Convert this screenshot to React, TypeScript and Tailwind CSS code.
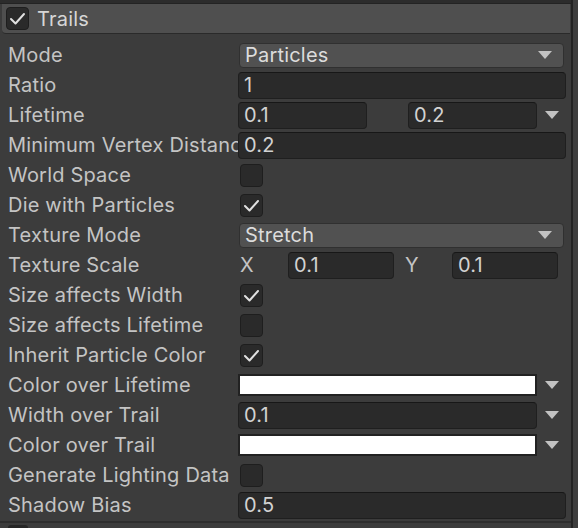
import React from 'react';

const FONT = "font-['Inter','Noto_Sans',sans-serif] tracking-[0.2px]";

function Arrow() {
  return (
    <svg width="14" height="9" viewBox="0 0 14 9" className="shrink-0">
      <polygon points="0,0 14,0 7,8" fill="#c2c2c2" />
    </svg>
  );
}

function Check() {
  return (
    <svg width="23" height="23" viewBox="0 0 23 23">
      <polyline points="5,12 9.5,16.5 18,7" fill="none" stroke="#e0e0e0" strokeWidth="2" strokeLinecap="round" strokeLinejoin="round" />
    </svg>
  );
}

function CheckBox({ on }: { on?: boolean }) {
  return (
    <div className="w-[23px] h-[23px] shrink-0 rounded-[4px] bg-[#2a2a2a] border border-[#1e1e1e]">
      {on && <div className="-m-px"><Check /></div>}
    </div>
  );
}

function TextField({ value, className = '' }: { value: string; className?: string }) {
  return (
    <div className={`h-[27px] rounded-[4px] bg-[#2a2a2a] border border-[#1f1f1f] border-t-[#171717] flex items-center px-[5px] text-[20px] text-[#d2d2d2] ${className}`}>
      {value}
    </div>
  );
}

function Popup({ value }: { value: string }) {
  return (
    <div className="h-[25px] w-[325px] ml-px rounded-[4px] bg-[#515151] border border-[#303030] flex items-center justify-between pl-[5px] pr-[11px] text-[20px] text-[#dcdcdc]">
      <span>{value}</span>
      <Arrow />
    </div>
  );
}

function WithArrow({ children }: { children: React.ReactNode }) {
  return (
    <div className="flex items-center">
      {children}
      <div className="w-[29px] flex justify-center pl-[1px]"><Arrow /></div>
    </div>
  );
}

function ColorBox() {
  return <div className="h-[22px] w-[299px] bg-white border-2 border-[#222222]" />;
}

function Row({ label, children }: { label: string; children?: React.ReactNode }) {
  return (
    <div className="h-[30px] flex items-center">
      <div className="w-[238px] pl-[8px] overflow-hidden whitespace-nowrap text-[20px] text-[#c4c4c4] leading-[30px]">{label}</div>
      <div className="flex-1 flex items-center">{children}</div>
    </div>
  );
}

export default function App() {
  return (
    <div className={`w-[578px] h-[528px] bg-[#3c3c3c] flex overflow-hidden ${FONT}`}>
      <div className="w-[571px]">
        <div className="h-[4px] bg-[#2c2c2c] border-b border-[#232323]" />
        <div className="h-[30px] ml-[2px] mr-[1px] bg-[#4f4f4f] border-b border-[#2a2a2a] rounded-bl-[4px] flex items-center pl-[4px] gap-[8px]">
          <CheckBox on />
          <span className="text-[20px] text-[#d6d6d6]">Trails</span>
        </div>
        <div className="pt-[6px] pr-[5px]">
          <Row label="Mode"><Popup value="Particles" /></Row>
          <Row label="Ratio"><TextField value="1" className="w-[328px]" /></Row>
          <Row label="Lifetime">
            <TextField value="0.1" className="w-[129px]" />
            <div className="w-[41px]" />
            <WithArrow><TextField value="0.2" className="w-[129px]" /></WithArrow>
          </Row>
          <Row label="Minimum Vertex Distance"><TextField value="0.2" className="w-[328px]" /></Row>
          <Row label="World Space"><div className="pl-[2px]"><CheckBox /></div></Row>
          <Row label="Die with Particles"><div className="pl-[2px]"><CheckBox on /></div></Row>
          <Row label="Texture Mode"><Popup value="Stretch" /></Row>
          <Row label="Texture Scale">
            <span className="w-[50px] pl-[2px] text-[20px] text-[#c4c4c4]">X</span>
            <TextField value="0.1" className="w-[106px]" />
            <span className="w-[58px] pl-[11px] text-[20px] text-[#c4c4c4]">Y</span>
            <TextField value="0.1" className="w-[106px]" />
          </Row>
          <Row label="Size affects Width"><div className="pl-[2px]"><CheckBox on /></div></Row>
          <Row label="Size affects Lifetime"><div className="pl-[2px]"><CheckBox /></div></Row>
          <Row label="Inherit Particle Color"><div className="pl-[2px]"><CheckBox on /></div></Row>
          <Row label="Color over Lifetime"><WithArrow><ColorBox /></WithArrow></Row>
          <Row label="Width over Trail"><WithArrow><TextField value="0.1" className="w-[299px]" /></WithArrow></Row>
          <Row label="Color over Trail"><WithArrow><ColorBox /></WithArrow></Row>
          <Row label="Generate Lighting Data"><div className="pl-[2px]"><CheckBox /></div></Row>
          <Row label="Shadow Bias"><TextField value="0.5" className="w-[328px]" /></Row>
        </div>
        <div className="mt-[1px] h-[2px] bg-[#2e2e2e]" />
        <div className="pl-[8px] pt-[2px]">
          <div className="w-[20px] h-[10px] bg-[#262626] rounded-t-[3px]" />
        </div>
      </div>
      <div className="w-[2px] bg-[#232323]" />
      <div className="flex-1 bg-[#3e3e3e]" />
    </div>
  );
}
